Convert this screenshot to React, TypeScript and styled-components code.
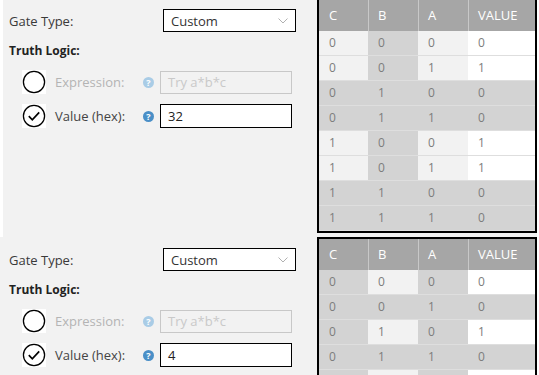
import styled, { createGlobalStyle } from 'styled-components';

type Tone = 'L' | 'D' | 'W';

interface EditorConfig {
  hex: string;
  edge?: boolean;
  shade: (c: number, b: number, a: number) => string;
}

const GlobalStyle = createGlobalStyle`
  html, body {
    margin: 0;
    padding: 0;
    background: #fff;
  }
  body {
    font-family: "Open Sans", "Liberation Sans", sans-serif;
    overflow: hidden;
  }
`;

const Page = styled.div`
  margin-top: -2px;
  display: flex;
  flex-direction: column;
`;

const Editor = styled.section<{ $edge?: boolean }>`
  display: flex;
  align-items: flex-start;
  width: 537px;
  height: 239px;
  flex-shrink: 0;
  box-sizing: border-box;
  background: #f2f2f2;
  overflow: hidden;
  ${p => p.$edge && 'box-shadow: inset 3px 0 0 #fff;'}
`;

const Form = styled.div`
  width: 317px;
  box-sizing: border-box;
  padding: 11px 0 0 9px;
  display: flex;
  flex-direction: column;
`;

const GateRow = styled.div`
  display: flex;
  align-items: center;
  height: 23px;
`;

const GateLabel = styled.span`
  width: 154px;
  font-size: 13px;
  color: #3a3a3a;
`;

const Select = styled.div`
  width: 133px;
  height: 23px;
  box-sizing: border-box;
  border: 1.5px solid #000;
  background: #fff;
  display: flex;
  align-items: center;
  justify-content: space-between;
  padding: 0 7px 0 7px;
  font-size: 13px;
  color: #333;
`;

const Heading = styled.div`
  margin-top: 10px;
  height: 18px;
  line-height: 18px;
  font-size: 12px;
  font-weight: 700;
  color: #222;
`;

const Options = styled.div`
  margin-top: 10px;
  padding-left: 13px;
  display: flex;
  flex-direction: column;
  gap: 10px;
`;

const Option = styled.div`
  display: grid;
  grid-template-columns: 24px 97px 17px 132px;
  align-items: center;
  height: 24px;
`;

const OptionLabel = styled.span<{ $off?: boolean }>`
  padding-left: 9px;
  font-size: 13px;
  color: ${p => (p.$off ? '#b4b4b4' : '#444')};
`;

const Help = styled.span<{ $off?: boolean }>`
  width: 11px;
  height: 11px;
  border-radius: 50%;
  background: ${p => (p.$off ? '#a9cce6' : '#4a8fc7')};
  color: #fff;
  font-size: 9px;
  font-weight: 700;
  line-height: 11px;
  text-align: center;
`;

const Input = styled.div<{ $off?: boolean }>`
  height: ${p => (p.$off ? '23px' : '24px')};
  box-sizing: border-box;
  border: ${p => (p.$off ? '1px solid #c8c8c8' : '1.5px solid #000')};
  background: ${p => (p.$off ? '#f2f2f2' : '#fff')};
  display: flex;
  align-items: center;
  padding-left: 7px;
  font-size: 13px;
  color: ${p => (p.$off ? '#c9c9c9' : '#222')};
`;

const Table = styled.div`
  display: grid;
  grid-template-columns: 49px 50px 50px 67px;
  border: 2px solid #000;
  background: #fff;
`;

const HeadCell = styled.div<{ $first?: boolean }>`
  height: 31px;
  line-height: 31px;
  padding-left: 10px;
  background: #a6a6a6;
  color: #fff;
  font-size: 13px;
  ${p => !p.$first && 'box-shadow: inset 1px 0 0 #c8c8c8;'}
`;

const tones: Record<Tone, string> = {
  L: '#f2f2f2',
  D: '#d3d3d3',
  W: '#ffffff',
};

const Cell = styled.div<{ $tone: Tone }>`
  height: 24px;
  line-height: 24px;
  padding-left: 10px;
  border-bottom: 1px solid #dedede;
  background: ${p => tones[p.$tone]};
  color: #7d7d7d;
  font-size: 12px;
`;

const RadioIcon = ({ checked }: { checked?: boolean }) => (
  <svg width="24" height="24" viewBox="0 0 24 24">
    <rect width="24" height="24" fill="#fff" />
    <circle cx="12" cy="12" r="10.6" fill="#fff" stroke="#000" strokeWidth="1.3" />
    {checked && (
      <path d="M6.8 12.2 L10.3 15.8 L17.2 8.4" fill="none" stroke="#000" strokeWidth="1.7" />
    )}
  </svg>
);

const Chevron = () => (
  <svg width="10" height="6" viewBox="0 0 10 6">
    <polyline points="0.5,0.5 5,5 9.5,0.5" fill="none" stroke="#b0b0b0" strokeWidth="1" />
  </svg>
);

const GateEditor = ({ hex, edge, shade }: EditorConfig) => {
  const value = parseInt(hex, 16);
  const rows = Array.from({ length: 8 }, (_, i) => {
    const c = (i >> 2) & 1;
    const b = (i >> 1) & 1;
    const a = i & 1;
    return { cells: [c, b, a, (value >> i) & 1], tones: shade(c, b, a).split('') as Tone[] };
  });

  return (
    <Editor $edge={edge}>
      <Form>
        <GateRow>
          <GateLabel>Gate Type:</GateLabel>
          <Select>
            Custom
            <Chevron />
          </Select>
        </GateRow>
        <Heading>Truth Logic:</Heading>
        <Options>
          <Option>
            <RadioIcon />
            <OptionLabel $off>Expression:</OptionLabel>
            <Help $off>?</Help>
            <Input $off>Try a*b*c</Input>
          </Option>
          <Option>
            <RadioIcon checked />
            <OptionLabel>Value (hex):</OptionLabel>
            <Help>?</Help>
            <Input>{hex}</Input>
          </Option>
        </Options>
      </Form>
      <Table>
        {['C', 'B', 'A', 'VALUE'].map((h, i) => (
          <HeadCell key={h} $first={i === 0}>{h}</HeadCell>
        ))}
        {rows.map((row, r) =>
          row.cells.map((v, i) => (
            <Cell key={`${r}-${i}`} $tone={row.tones[i]}>{v}</Cell>
          ))
        )}
      </Table>
    </Editor>
  );
};

const editors: EditorConfig[] = [
  { hex: '32', edge: true, shade: (_c, b) => (b === 0 ? 'LDLW' : 'DDDD') },
  { hex: '4', shade: (_c, _b, a) => (a === 0 ? 'DLDW' : 'DDDD') },
];

export default function App() {
  return (
    <>
      <GlobalStyle />
      <Page>
        {editors.map(e => (
          <GateEditor key={e.hex} {...e} />
        ))}
      </Page>
    </>
  );
}
